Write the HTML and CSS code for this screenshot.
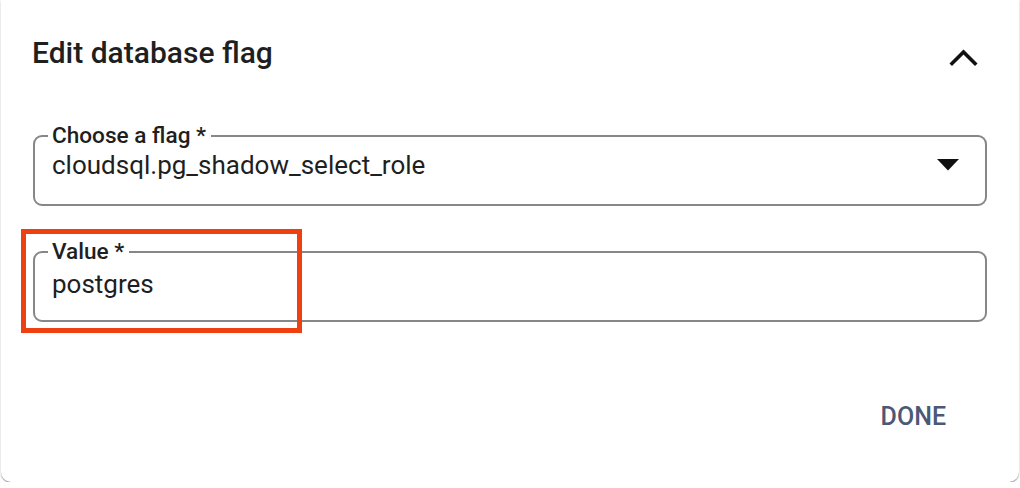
FILE: index.html
```html
<!DOCTYPE html>
<html>
<head>
<meta charset="utf-8">
<link rel="stylesheet" href="styles.css">
</head>
<body>
<div class="card">
  <div class="header">
    <h2 class="title">Edit database flag</h2>
    <svg class="chevron" width="32" height="20" viewBox="0 0 32 20"><polyline points="4,15.5 15.5,4 27,15.5" fill="none" stroke="#111" stroke-width="3.6" stroke-linecap="square"/></svg>
  </div>
  <fieldset class="field field-select">
    <legend class="field-label">Choose a flag *</legend>
    <div class="field-row">
      <span class="field-value">cloudsql.pg_shadow_select_role</span>
      <svg class="dropdown" width="22" height="12" viewBox="0 0 22 12"><polygon points="0,0 22,0 11,11.5" fill="#111"/></svg>
    </div>
  </fieldset>
  <div class="highlight-wrap">
    <fieldset class="field field-input">
      <legend class="field-label">Value *</legend>
      <div class="field-row">
        <span class="field-value">postgres</span>
      </div>
    </fieldset>
    <div class="highlight"></div>
  </div>
  <div class="actions">
    <button class="btn-done">DONE</button>
  </div>
</div>
</body>
</html>
```

FILE: styles.css
```css
html, body {
  margin: 0;
  padding: 0;
  background: #fff;
}
body {
  font-family: Roboto, "Noto Sans", Arial, sans-serif;
  color: #1f1f1f;
}
.card {
  box-sizing: border-box;
  height: 482px;
  margin: 0 1px;
  padding: 35px 32px 0 32px;
  background: #fff;
  border-radius: 0 0 10px 10px;
  box-shadow: 0 1px 1px rgba(0, 0, 0, 0.35), 0 1px 3px rgba(0, 0, 0, 0.12);
}
.header {
  display: flex;
  align-items: center;
  justify-content: space-between;
  height: 36px;
}
.title {
  margin: 0 0 0 -1px;
  font-size: 30px;
  line-height: 36px;
  font-weight: 500;
  color: #1f1f1f;
}
.chevron {
  display: block;
  margin-right: 7px;
  margin-top: 10px;
}
.field {
  margin: 0;
  border: 2px solid #878787;
  border-radius: 9px;
  min-width: 0;
}
.field-select {
  margin-top: 53px;
  padding: 2px 15px 24px 17px;
}
.field-input {
  padding: 5px 15px 21px 17px;
}
.field-label {
  margin-left: -4px;
  padding: 0 5px 0 4px;
  font-size: 22.6px;
  line-height: 24px;
  font-weight: 500;
  color: #1f1f1f;
}
.field-row {
  display: flex;
  align-items: center;
  justify-content: space-between;
  height: 30px;
}
.field-value {
  font-size: 26px;
  line-height: 30px;
  color: #1f1f1f;
}
.dropdown {
  display: block;
  margin-right: 11px;
}
.highlight-wrap {
  position: relative;
  margin-top: 34px;
}
.highlight {
  position: absolute;
  left: -12px;
  top: -11px;
  width: 271px;
  height: 94px;
  border: 5px solid #ee4010;
}
.actions {
  display: flex;
  justify-content: flex-end;
  margin-top: 80px;
}
.btn-done {
  border: 0;
  background: transparent;
  font-family: Roboto, "Noto Sans", Arial, sans-serif;
  font-size: 25px;
  font-weight: 500;
  line-height: 30px;
  color: #4b5876;
  padding: 0 41px 0 0;
  margin: 0;
}
```
